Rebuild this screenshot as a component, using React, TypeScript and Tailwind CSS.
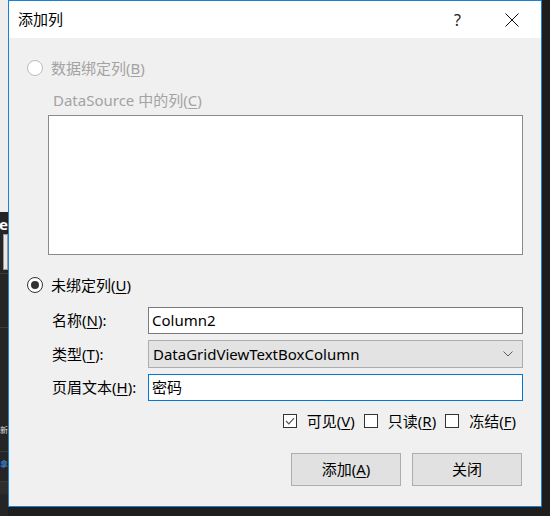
import React from 'react';

const font = { fontFamily: '"Noto Sans", "Noto Sans CJK SC", sans-serif' };

function Radio({ checked, disabled }: { checked?: boolean; disabled?: boolean }) {
  return (
    <span
      className={`w-[16px] h-[16px] rounded-full border flex items-center justify-center bg-white shrink-0 ${
        disabled ? 'border-[#bcbcbc]' : 'border-[#333333]'
      }`}
    >
      {checked && <span className="w-[8px] h-[8px] rounded-full bg-[#333333]" />}
    </span>
  );
}

function CheckBox({ checked }: { checked?: boolean }) {
  return (
    <span className="w-[14px] h-[14px] border border-[#333333] bg-white flex items-center justify-center shrink-0">
      {checked && (
        <svg width="10" height="8" viewBox="0 0 10 8">
          <path d="M1 4 L3.8 6.8 L9 1.2" fill="none" stroke="#555555" strokeWidth="1.2" />
        </svg>
      )}
    </span>
  );
}

function Key({ k }: { k: string }) {
  return (
    <>
      (<span className="underline underline-offset-2">{k}</span>)
    </>
  );
}

export default function App() {
  return (
    <div className="w-[550px] h-[516px] bg-[#1e1e1e] flex overflow-hidden" style={font}>
      {/* background window edge */}
      <div className="w-[8px] flex flex-col shrink-0">
        <div className="h-[212px] bg-[#eeeeee]" />
        <div className="flex-1 bg-[#252526] flex flex-col">
          <div className="h-[24px] text-white text-[15px] font-bold leading-[24px] overflow-hidden whitespace-nowrap flex justify-end">e</div>
          <div className="mt-[-2px] h-[36px] ml-[3px] bg-[#e8e8e8] border border-[#999999]" />
          <div className="h-[4px] border-b border-[#3a3a3a]" />
          <div className="h-[54px] border-b border-[#3a3a3a]" />
          <div className="mt-[90px] h-[24px] text-[#dddddd] text-[8px] leading-[24px] overflow-hidden whitespace-nowrap">新</div>
          <div className="h-[10px] border-b border-[#3a3a3a]" />
          <div className="h-[24px] text-[#3794e8] text-[8px] leading-[24px] overflow-hidden whitespace-nowrap">拿</div>
          <div className="h-[6px] border-b border-[#3a3a3a]" />
          <div className="h-[12px] bg-[#2d2d2d]" />
        </div>
      </div>

      {/* dialog */}
      <div className="w-[534px] h-[507px] border border-[#1b7fd4] flex flex-col shrink-0 bg-[#f0f0f0]">
        <div className="h-[37px] bg-white flex items-center pl-[9px] shrink-0">
          <span className="text-[15px] text-black">添加列</span>
          <span className="ml-auto text-[16px] text-[#222222] mr-[44px]">?</span>
          <svg width="14" height="14" viewBox="0 0 14 14" className="mr-[22px]">
            <path d="M0.5 0.5 L13.5 13.5 M13.5 0.5 L0.5 13.5" stroke="#111111" strokeWidth="1" />
          </svg>
        </div>

        <div className="flex-1 flex flex-col pl-[18px] pr-[18px] text-[15px]">
          <div className="mt-[20px] h-[20px] flex items-center gap-[8px] text-[#a3a3a3]">
            <Radio disabled />
            <span>
              数据绑定列<Key k="B" />
            </span>
          </div>
          <div className="mt-[12px] h-[20px] flex items-center pl-[26px] text-[#a3a3a3]">
            <span>
              DataSource 中的列<Key k="C" />
            </span>
          </div>
          <div className="mt-[5px] ml-[21px] h-[140px] bg-white border border-[#8a8a8a]" />

          <div className="mt-[20px] h-[20px] flex items-center gap-[8px] text-black">
            <Radio checked />
            <span>
              未绑定列<Key k="U" />
            </span>
          </div>

          <div className="mt-[12px] flex items-center h-[27px]">
            <span className="w-[121px] shrink-0 pl-[25px] text-black whitespace-nowrap">
              名称<Key k="N" />:
            </span>
            <div className="flex-1 h-[27px] bg-white border border-[#7a7a7a] flex items-center pl-[3px] text-black">
              Column2
            </div>
          </div>
          <div className="mt-[6px] flex items-center h-[28px]">
            <span className="w-[121px] shrink-0 pl-[25px] text-black whitespace-nowrap">
              类型<Key k="T" />:
            </span>
            <div className="flex-1 h-[28px] bg-[#e3e3e3] border border-[#adadad] flex items-center pl-[4px] pr-[9px] text-black">
              <span>DataGridViewTextBoxColumn</span>
              <svg width="10" height="6" viewBox="0 0 10 6" className="ml-auto">
                <path d="M0.5 0.5 L5 5 L9.5 0.5" fill="none" stroke="#606060" strokeWidth="1" />
              </svg>
            </div>
          </div>
          <div className="mt-[6px] flex items-center h-[27px]">
            <span className="w-[121px] shrink-0 pl-[25px] text-black whitespace-nowrap">
              页眉文本<Key k="H" />:
            </span>
            <div className="flex-1 h-[27px] bg-white border border-[#0078d7] flex items-center pl-[3px] text-black">
              密码
            </div>
          </div>

          <div className="mt-[10px] h-[20px] flex items-center justify-end pr-[7px] text-black">
            <CheckBox checked />
            <span className="ml-[10px]">
              可见<Key k="V" />
            </span>
            <span className="ml-[9px]">
              <CheckBox />
            </span>
            <span className="ml-[10px]">
              只读<Key k="R" />
            </span>
            <span className="ml-[9px]">
              <CheckBox />
            </span>
            <span className="ml-[10px]">
              冻结<Key k="F" />
            </span>
          </div>

          <div className="mt-[22px] flex justify-end gap-[11px] pr-[1px]">
            <button className="w-[110px] h-[33px] bg-[#e1e1e1] border border-[#adadad] text-black text-[15px]">
              添加<Key k="A" />
            </button>
            <button className="w-[110px] h-[33px] bg-[#e1e1e1] border border-[#adadad] text-black text-[15px]">
              关闭
            </button>
          </div>
        </div>
      </div>
      <div className="flex-1 bg-[#1e1e1e]" />
    </div>
  );
}
